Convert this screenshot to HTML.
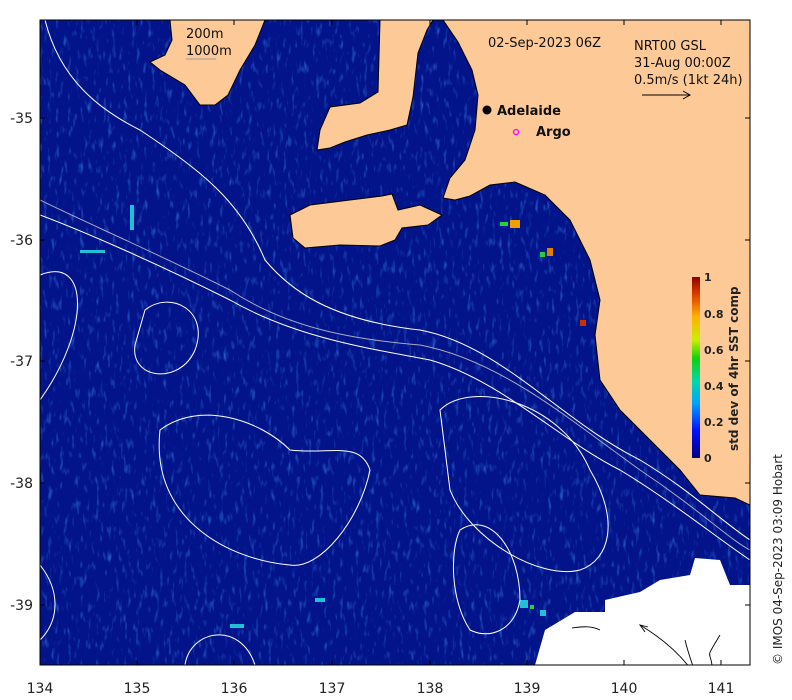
<!DOCTYPE html>
<html><head><meta charset="utf-8"><style>
html,body{margin:0;padding:0;background:#fff;width:792px;height:700px;overflow:hidden}
svg{display:block;font-family:"DejaVu Sans","Liberation Sans",sans-serif}
</style></head><body>
<svg width="792" height="700" viewBox="0 0 792 700" xmlns="http://www.w3.org/2000/svg">
<defs>
<linearGradient id="jet" x1="0" y1="1" x2="0" y2="0">
<stop offset="0" stop-color="#00007f"/><stop offset="0.15" stop-color="#0010ff"/>
<stop offset="0.3" stop-color="#00a0ff"/><stop offset="0.42" stop-color="#00d8b0"/>
<stop offset="0.55" stop-color="#10d010"/><stop offset="0.65" stop-color="#c8f000"/>
<stop offset="0.78" stop-color="#ffb000"/><stop offset="0.9" stop-color="#e04000"/>
<stop offset="1" stop-color="#900000"/></linearGradient>
<clipPath id="c"><rect x="40" y="20" width="710" height="645"/></clipPath>
<filter id="n" x="0" y="0" width="100%" height="100%">
<feTurbulence type="fractalNoise" baseFrequency="0.25 0.08" numOctaves="2" seed="3"/>
<feColorMatrix type="matrix" values="0 0 0 0 0.05  0 0 0 0 0.3  0 0 0 0 0.95  0 0 0 2.2 -1.25"/>
</filter>
</defs>
<rect x="40" y="20" width="710" height="645" fill="#03138a"/>
<g clip-path="url(#c)">
<rect x="40" y="20" width="710" height="645" filter="url(#n)" opacity="0.7"/>
<g fill="#20c0d8">
<rect x="130" y="205" width="4" height="25"/><rect x="80" y="250" width="25" height="3"/>
<rect x="315" y="598" width="10" height="4"/><rect x="230" y="624" width="14" height="4"/>
<rect x="520" y="600" width="8" height="8"/><rect x="540" y="610" width="6" height="6"/>
</g>
<g fill="#20d040"><rect x="530" y="605" width="4" height="4"/><rect x="500" y="222" width="8" height="4"/><rect x="540" y="252" width="5" height="5"/></g>
<rect x="510" y="220" width="10" height="8" fill="#f0a000"/><rect x="547" y="248" width="6" height="8" fill="#e08000"/>
<rect x="580" y="320" width="6" height="6" fill="#d03000"/>
<!-- land -->
<g fill="#fdca97" stroke="#000" stroke-width="1">
<path d="M170,20 L265,20 L255,45 L240,70 L228,95 L215,105 L200,105 L185,85 L160,70 L150,62 L165,55 L172,40 Z"/>
<path d="M380,20 L433,20 L427,30 L418,53 L413,97 L407,125 L390,130 L367,135 L345,142 L330,148 L317,150 L320,130 L330,107 L360,103 L378,92 Z"/>
<path d="M443,20 L750,20 L750,505 L735,498 L700,495 L680,470 L650,440 L620,410 L600,380 L595,335 L600,300 L590,260 L570,220 L545,195 L515,182 L490,185 L470,196 L455,200 L443,198 L450,178 L465,160 L475,130 L478,95 L472,70 L458,42 Z"/>
<path d="M290,215 L310,205 L350,200 L382,196 L392,194 L398,210 L420,205 L442,215 L428,225 L402,228 L395,240 L380,246 L340,245 L305,248 L293,238 Z"/>
</g>
<!-- no data -->
<path d="M535,665 L545,630 L575,612 L605,612 L605,600 L640,592 L660,580 L690,575 L695,558 L720,560 L730,585 L750,585 L750,665 Z" fill="#fff"/>
<!-- arrows -->
<g fill="none" stroke="#000" stroke-width="0.9">
<path d="M640,625 C665,640 680,655 690,668"/><path d="M645,632 L640,625 L648,627"/>
<path d="M685,640 C690,660 695,672 700,685"/>
<path d="M720,635 C705,660 710,650 712,665"/>
<path d="M600,630 C590,625 580,627 572,628"/>
</g>
<!-- contours -->
<g fill="none" stroke="#fff" stroke-width="1">
<path d="M45,20 C60,80 100,110 140,130 C200,170 240,200 265,260 C290,290 330,320 420,330 C500,345 560,420 640,460 C690,490 720,520 750,540"/>
<path d="M40,215 C80,230 150,260 230,300 C300,340 380,350 430,360 C500,380 560,440 620,470 C670,500 720,540 750,560"/>
<path d="M40,275 C90,255 90,330 40,400"/>
<path d="M145,310 C170,290 210,310 195,350 C180,385 130,380 135,345 Z"/>
<path d="M160,430 C200,400 260,420 290,450 C330,455 360,440 370,470 C360,520 320,570 290,565 C230,560 150,520 160,430 Z"/>
<path d="M440,410 C470,380 560,400 590,470 C620,520 610,560 580,570 C540,580 470,540 450,490 Z"/>
<path d="M460,530 C490,510 520,550 520,600 C515,630 490,640 470,630 C450,600 450,550 460,530 Z"/>
<path d="M40,565 C60,590 60,620 40,640"/>
<path d="M185,665 C190,630 240,620 255,665"/>
</g>
<g fill="none" stroke="#aab" stroke-width="1">
<path d="M40,200 C80,220 150,250 230,290 C290,330 360,340 420,345 C500,360 570,420 640,470 C700,510 730,540 750,550"/>
</g>
</g>
<rect x="40" y="20" width="710" height="645" fill="none" stroke="#000" stroke-width="1"/>
<g stroke="#000" stroke-width="1">
<path d="M40,20v5M137,20v5M234,20v5M332,20v5M430,20v5M527,20v5M624,20v5M721,20v5M40,665v-5M137,665v-5M234,665v-5M332,665v-5M430,665v-5M527,665v-5M624,665v-5M721,665v-5M40,118h5M40,240h5M40,361h5M40,483h5M40,605h5M750,118h-5M750,240h-5M750,361h-5M750,483h-5M750,605h-5"/>
</g>
<g font-size="14" fill="#222">
<text x="40" y="693" text-anchor="middle">134</text><text x="137" y="693" text-anchor="middle">135</text>
<text x="234" y="693" text-anchor="middle">136</text><text x="332" y="693" text-anchor="middle">137</text>
<text x="430" y="693" text-anchor="middle">138</text><text x="527" y="693" text-anchor="middle">139</text>
<text x="624" y="693" text-anchor="middle">140</text><text x="721" y="693" text-anchor="middle">141</text>
<text x="33" y="123" text-anchor="end">-35</text><text x="33" y="245" text-anchor="end">-36</text>
<text x="33" y="366" text-anchor="end">-37</text><text x="33" y="488" text-anchor="end">-38</text>
<text x="33" y="610" text-anchor="end">-39</text>
</g>
<g font-size="13" fill="#111">
<text x="186" y="38">200m</text><text x="186" y="55">1000m</text>
<line x1="186" y1="59" x2="216" y2="59" stroke="#999"/>
<text x="488" y="47">02-Sep-2023 06Z</text>
<text x="634" y="50">NRT00 GSL</text><text x="634" y="67">31-Aug 00:00Z</text><text x="634" y="84">0.5m/s (1kt 24h)</text>
<path d="M642,95 L690,95 M683,91 L690,95 L683,99" stroke="#000" fill="none"/>
</g>
<circle cx="487" cy="110" r="4.5" fill="#000"/>
<text x="497" y="115" font-size="13" font-weight="bold" fill="#111">Adelaide</text>
<circle cx="516" cy="132" r="2.5" fill="none" stroke="#f0f" stroke-width="1.3"/>
<text x="536" y="136" font-size="13" font-weight="bold" fill="#111">Argo</text>
<rect x="692" y="277" width="8" height="181" fill="url(#jet)"/>
<g font-size="11" font-weight="bold" fill="#222">
<text x="704" y="281">1</text><text x="704" y="318">0.8</text><text x="704" y="354">0.6</text>
<text x="704" y="390">0.4</text><text x="704" y="426">0.2</text><text x="704" y="462">0</text>
<text transform="translate(738,451) rotate(-90)" font-size="12">std dev of 4hr SST comp</text>
</g>
<text transform="translate(782,665) rotate(-90)" font-size="12" fill="#222">© IMOS 04-Sep-2023 03:09 Hobart</text>
</svg>
</body></html>
